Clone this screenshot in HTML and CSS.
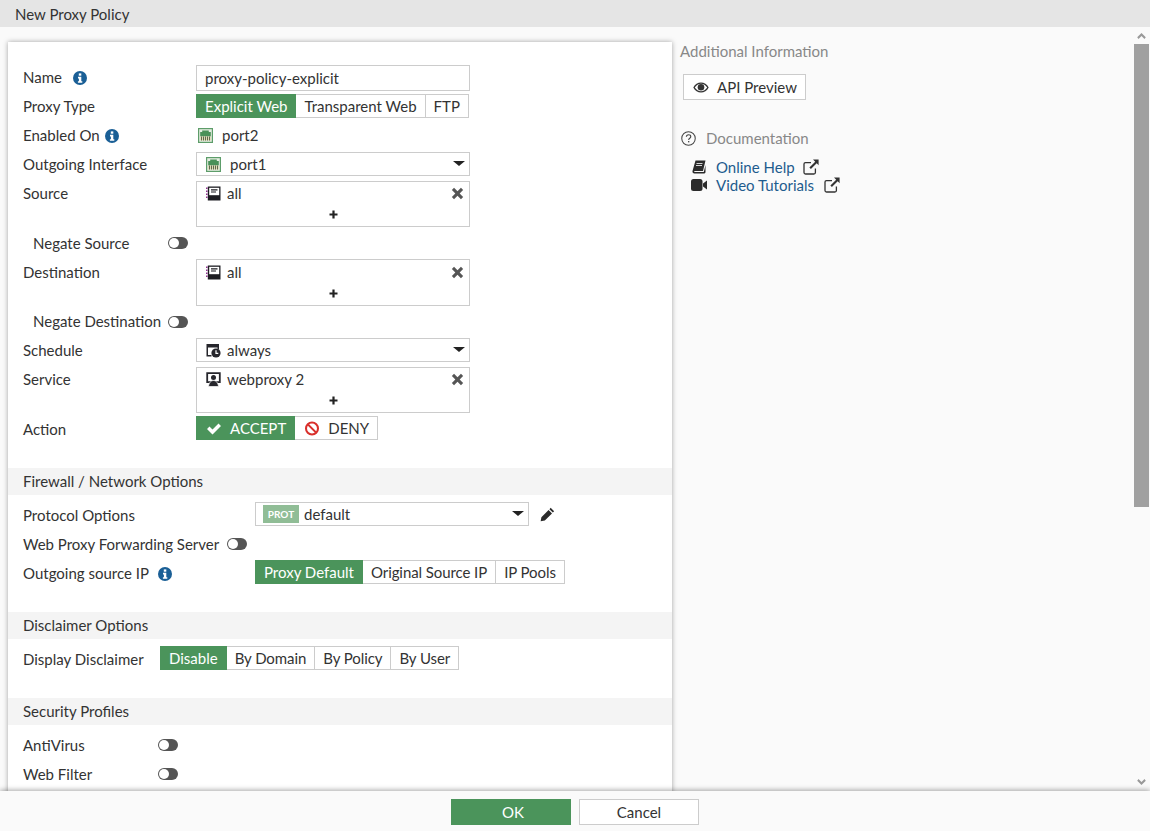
FILE: index.html
```html
<!DOCTYPE html>
<html lang="en">
<head>
<meta charset="utf-8">
<title>New Proxy Policy</title>
<link rel="stylesheet" href="styles.css">
</head>
<body>
<svg class="sprite" aria-hidden="true">
  <symbol id="i-info" viewBox="0 0 14 14"><circle cx="7" cy="7" r="7" fill="#1a5f96"/><rect x="5.800" y="2.400" width="2.500" height="2.300" fill="#fff"/><path d="M5 5.800h3.300v4.400h1v1.600H4.900v-1.600h1V7.400H5z" fill="#fff"/></symbol>
  <symbol id="i-port" viewBox="0 0 15 15"><rect x=".6" y=".6" width="13.800" height="13.800" fill="#e6eee2" stroke="#5d9d6a" stroke-width="1.200"/><path d="M2.200 8.500V4h2V2.600h6.600V4h2v4.500z" fill="#4a9158"/><path d="M2.200 8.500h10.600v4H2.200z" fill="#e0dab4"/><path d="M3.500 8.500v4M5.500 8.500v4M7.500 8.500v4M9.500 8.500v4M11.500 8.500v4" stroke="#5f6a4e" stroke-width="1"/></symbol>
  <symbol id="i-addr" viewBox="0 0 15 15"><path d="M1.800.5h12.700v14H1.800z" fill="#1d1d22"/><rect x="3.200" y="1.800" width="10" height="7.400" fill="#fff"/><path d="M5 3.800h6.500M5 6h5" stroke="#1d1d22" stroke-width="1.200"/><path d="M.8 1.500v1.500M.8 4.500V6M.8 7.500V9M.8 10.500V12" stroke="#8a2c8a" stroke-width="1.500"/></symbol>
  <symbol id="i-sched" viewBox="0 0 15 15"><path d="M.5 1h12.500v5.500h-1.500V4.500H2v7.500h3.500v1.500H.5z" fill="#26262c"/><circle cx="10" cy="10" r="4.600" fill="#26262c"/><path d="M10 7.200V10.300h2.300" stroke="#fff" stroke-width="1.200" fill="none"/></symbol>
  <symbol id="i-proxy" viewBox="0 0 15 15"><path d="M1.200 1.200h12.600v9h-12.600z" fill="none" stroke="#26262c" stroke-width="1.800"/><circle cx="7.500" cy="5.500" r="2.500" fill="#26262c"/><path d="M2.500 14.500c.4-4 2.600-6 5-6s4.600 2 5 6z" fill="#26262c" stroke="#fff" stroke-width=".7"/></symbol>
  <symbol id="i-x" viewBox="0 0 12 12"><path d="M2.800 .8 6 4 9.200 .8 11.200 2.800 8 6l3.200 3.200-2 2L6 8l-3.200 3.200-2-2L4 6 .8 2.800z" fill="#555"/></symbol>
  <symbol id="i-plus" viewBox="0 0 9 9"><path d="M3.400.5h2.200v2.900h2.900v2.200H5.600v2.900H3.400V5.600H.5V3.400h2.900z" fill="#222"/></symbol>
  <symbol id="i-ext" viewBox="0 0 16 16"><path d="M8 3.600H2.500A1.500 1.500 0 0 0 1 5.100v8.400A1.500 1.500 0 0 0 2.500 15h8.400a1.500 1.500 0 0 0 1.500-1.500V9.500" fill="none" stroke="#333" stroke-width="1.300"/><path d="M10 .6h5.600v5.600l-1.900-1.900-5.800 5.800-1.500-1.500 5.800-5.800z" fill="#333"/></symbol>
</svg>

<header class="topbar">New Proxy Policy</header>

<div class="main">
  <section class="card">
    <div class="group">
      <div class="row">
        <label class="lbl lbl-w173 lbl-up">Name <svg class="info info-name"><use href="#i-info"/></svg></label>
        <div class="input">proxy-policy-explicit</div>
      </div>
      <div class="row">
        <label class="lbl lbl-w173 lbl-up">Proxy Type</label>
        <div class="seg"><span class="opt on">Explicit Web</span><span class="opt">Transparent Web</span><span class="opt">FTP</span></div>
      </div>
      <div class="row">
        <label class="lbl lbl-w173 lbl-up">Enabled On <svg class="info"><use href="#i-info"/></svg></label>
        <div class="static"><svg class="ic ic-port"><use href="#i-port"/></svg>port2</div>
      </div>
      <div class="row">
        <label class="lbl lbl-w173 lbl-up">Outgoing Interface</label>
        <div class="select"><svg class="ic ic-port"><use href="#i-port"/></svg>port1<span class="caret"></span></div>
      </div>
      <div class="row">
        <label class="lbl lbl-w173 lbl-up">Source</label>
        <div class="multi">
          <div class="entry"><svg class="ic"><use href="#i-addr"/></svg>all<svg class="x"><use href="#i-x"/></svg></div>
          <div class="add"><svg class="plus"><use href="#i-plus"/></svg></div>
        </div>
      </div>
      <div class="row row-sub">
        <label class="lbl lbl-w135">Negate Source</label><span class="toggle"></span>
      </div>
      <div class="row">
        <label class="lbl lbl-w173">Destination</label>
        <div class="multi multi-tall">
          <div class="entry"><svg class="ic"><use href="#i-addr"/></svg>all<svg class="x"><use href="#i-x"/></svg></div>
          <div class="add"><svg class="plus"><use href="#i-plus"/></svg></div>
        </div>
      </div>
      <div class="row row-sub">
        <label class="lbl lbl-w135 lbl-up">Negate Destination</label><span class="toggle"></span>
      </div>
      <div class="row">
        <label class="lbl lbl-w173 lbl-up">Schedule</label>
        <div class="select"><svg class="ic"><use href="#i-sched"/></svg>always<span class="caret"></span></div>
      </div>
      <div class="row">
        <label class="lbl lbl-w173 lbl-up">Service</label>
        <div class="multi">
          <div class="entry"><svg class="ic"><use href="#i-proxy"/></svg>webproxy 2<svg class="x"><use href="#i-x"/></svg></div>
          <div class="add"><svg class="plus"><use href="#i-plus"/></svg></div>
        </div>
      </div>
      <div class="row">
        <label class="lbl lbl-w173">Action</label>
        <div class="seg">
          <span class="opt on opt-icon"><svg class="act" viewBox="0 0 16 14"><path d="M1 7.500 3.500 5l3 3L12.500 2 15 4.500 6.500 13z" fill="#fff"/></svg>ACCEPT</span>
          <span class="opt opt-icon"><svg class="act" viewBox="0 0 16 16"><circle cx="8" cy="8" r="6.400" fill="none" stroke="#d9302c" stroke-width="2.200"/><path d="M3.600 3.600l8.800 8.800" stroke="#d9302c" stroke-width="2.200"/></svg>DENY</span>
        </div>
      </div>
    </div>

    <h3 class="band">Firewall / Network Options</h3>
    <div class="group group-tight">
      <div class="row">
        <label class="lbl lbl-w232">Protocol Options</label>
        <div class="select"><span class="prot">PROT</span>default<span class="caret"></span></div>
        <svg class="pencil" viewBox="0 0 14 14"><path d="M10 .8 13.200 4 12 5.200 8.800 2zM8 2.800 11.200 6 4.500 12.700.6 13.400l.7-3.900z" fill="#2b2b2b"/></svg>
      </div>
      <div class="row">
        <label class="lbl lbl-w204">Web Proxy Forwarding Server</label><span class="toggle"></span>
      </div>
      <div class="row">
        <label class="lbl lbl-w232">Outgoing source IP <svg class="info info-src"><use href="#i-info"/></svg></label>
        <div class="seg seg-tight"><span class="opt on">Proxy Default</span><span class="opt">Original Source IP</span><span class="opt">IP Pools</span></div>
      </div>
    </div>

    <h3 class="band">Disclaimer Options</h3>
    <div class="group group-tight">
      <div class="row">
        <label class="lbl lbl-w137">Display Disclaimer</label>
        <div class="seg seg-tight"><span class="opt on">Disable</span><span class="opt">By Domain</span><span class="opt">By Policy</span><span class="opt">By User</span></div>
      </div>
    </div>

    <h3 class="band">Security Profiles</h3>
    <div class="group group-tight">
      <div class="row">
        <label class="lbl lbl-w135">AntiVirus</label><span class="toggle"></span>
      </div>
      <div class="row">
        <label class="lbl lbl-w135">Web Filter</label><span class="toggle"></span>
      </div>
    </div>
  </section>

  <aside class="side">
    <h4 class="side-title">Additional Information</h4>
    <button class="api" type="button">
      <svg class="eye" viewBox="0 0 16 11"><path d="M8 .5C4.800.5 2 2.300.3 5.500 2 8.700 4.800 10.500 8 10.500s6-1.800 7.700-5C14 2.300 11.200.500 8 .5zm0 1.200c2.500 0 4.700 1.400 6.200 3.800-1.500 2.400-3.700 3.800-6.200 3.800S3.300 7.900 1.800 5.500C3.300 3.100 5.500 1.700 8 1.700z" fill="#333"/><circle cx="8" cy="5.300" r="3.300" fill="#333"/></svg>
      API Preview
    </button>
    <div class="doc-head">
      <svg class="help" viewBox="0 0 16 16"><circle cx="8" cy="8" r="7.200" fill="none" stroke="#444" stroke-width="1.100"/><path d="M5.700 6.200C5.800 4.800 6.800 4 8.100 4c1.400 0 2.300.9 2.300 2 0 1.800-2.200 1.700-2.200 3.500" fill="none" stroke="#444" stroke-width="1.200"/><rect x="7.500" y="10.700" width="1.400" height="1.400" fill="#444"/></svg>
      Documentation
    </div>
    <div class="links">
      <a class="doc-link"><svg class="doc-ic" viewBox="0 0 14 14"><path d="M3.500.5H13.500L11 11H2.800C2 11 1.800 11.800 2.600 12H11.800L13.500 5V12.500L12.500 13.500H2.500C1 13.500.2 12.500.5 11z" fill="#2b2b2b"/><path d="M4.500 3.500h6M4 5.500h6" stroke="#fff" stroke-width=".8"/></svg>Online Help<svg class="ext"><use href="#i-ext"/></svg></a>
      <a class="doc-link"><svg class="doc-ic" viewBox="0 0 16 12"><rect x="0" y="0" width="11.500" height="12" rx="2.500" fill="#2b2b2b"/><path d="M12 4.500 16 1.500v9L12 7.500z" fill="#2b2b2b"/></svg>Video Tutorials<svg class="ext ext-wide"><use href="#i-ext"/></svg></a>
    </div>
  </aside>

  <div class="scrollbar">
    <svg class="chev" viewBox="0 0 10 7"><path d="M5 0 10 5 8.500 7 5 3.500 1.500 7 0 5z" fill="#999"/></svg>
    <div class="thumb-track"><div class="thumb"></div></div>
    <svg class="chev" viewBox="0 0 10 7"><path d="M5 7 0 2 1.500 0 5 3.500 8.500 0 10 2z" fill="#999"/></svg>
  </div>
</div>

<footer class="footer">
  <button class="btn btn-ok" type="button">OK</button>
  <button class="btn" type="button">Cancel</button>
</footer>
</body>
</html>
```
FILE: styles.css
```css
* { box-sizing: border-box; }
html, body { margin: 0; height: 100%; }
body {
  height: 831px;
  overflow: hidden;
  display: flex;
  flex-direction: column;
  background: #fafafa;
  color: #333;
  font: 15px/20px Lato, "Open Sans", sans-serif;
}
.sprite { position: absolute; width: 0; height: 0; }

.topbar {
  height: 27px;
  flex: none;
  padding: 4px 15px 0;
  background: #e5e5e5;
  line-height: 20px;
}

.main {
  flex: 1;
  display: flex;
  min-height: 0;
  overflow: hidden;
}

.card {
  flex: none;
  width: 664px;
  margin: 15px 0 0 8px;
  height: 800px;
  padding-top: 23px;
  background: #fff;
  box-shadow: 0 0 5px rgba(0, 0, 0, .35);
}

.group { display: flex; flex-direction: column; gap: 3px; padding-left: 15px; }
.group-tight { padding-top: 7px; }

.row { display: flex; align-items: flex-start; min-height: 26px; }
.row-sub { padding-left: 10px; }

.lbl { flex: none; line-height: 26px; display: block; }
.lbl-up { line-height: 24px; }
.lbl-w173 { width: 173px; }
.lbl-w232 { width: 232px; }
.lbl-w204 { width: 204px; }
.lbl-w137 { width: 137px; }
.lbl-w135 { width: 135px; }

.info { width: 14px; height: 14px; vertical-align: -2px; margin-left: 2px; }
.info-name { margin-left: 7px; }
.info-src { margin-left: 6px; }

.input, .select, .multi { width: 274px; border: 1px solid #ccc; background: #fff; }
.input { height: 26px; padding-left: 8px; line-height: 25px; }

.select {
  height: 24px;
  display: flex;
  align-items: center;
  padding-left: 9px;
  position: relative;
  line-height: 23px;
}
.caret {
  position: absolute;
  right: 4px;
  top: 8px;
  width: 0;
  height: 0;
  border-left: 6px solid transparent;
  border-right: 6px solid transparent;
  border-top: 5px solid #222;
}

.ic { width: 15px; height: 15px; margin-right: 6px; flex: none; }
.ic-port { margin-right: 9px; }

.static { display: flex; align-items: center; height: 24px; padding-left: 2px; }

.multi { height: 46px; padding-top: 1px; }
.multi-tall { height: 47px; padding-top: 2px; }
.entry { display: flex; align-items: center; height: 20px; line-height: 20px; padding: 0 5px 0 9px; }
.x { width: 13px; height: 13px; margin-left: auto; }
.add { display: flex; justify-content: center; padding-top: 7px; height: 21px; }
.plus { width: 9px; height: 9px; }

.seg { display: flex; height: 24px; }
.opt {
  display: flex;
  align-items: center;
  padding: 0 8px;
  border: 1px solid #ccc;
  border-left-width: 0;
  background: #fff;
  line-height: 23px;
}
.opt:first-child { border-left-width: 1px; }
.opt.on { background: #4b945b; border-color: #4b945b; color: #fff; }
.seg-tight .opt:not(.on) { letter-spacing: -.08px; }
.opt-icon { padding: 0 8px 0 9px; }
.opt-icon + .opt-icon { padding-left: 9px; }
.act { width: 16px; height: 15px; margin-right: 8px; }

.toggle {
  width: 20px;
  height: 12px;
  margin-top: 7px;
  border-radius: 6px;
  background: #555;
  position: relative;
  flex: none;
}
.toggle::before {
  content: "";
  position: absolute;
  left: 1px;
  top: 1px;
  width: 10px;
  height: 10px;
  border-radius: 50%;
  background: #fff;
}

.band {
  margin: 26px 0 0;
  height: 27px;
  padding-left: 15px;
  font-size: inherit;
  font-weight: 400;
  line-height: 27px;
  background: #f4f4f4;
}

.prot {
  width: 36px;
  height: 18px;
  margin-right: 5px;
  background: #90bd96;
  color: #fff;
  font-size: 10px;
  font-weight: 700;
  line-height: 18px;
  text-align: center;
  flex: none;
}
.group-tight .select { padding-left: 7px; }
.pencil { width: 15px; height: 15px; margin: 5px 0 0 11px; }

.side { flex: 1; padding: 0 0 0 8px; min-width: 0; }
.side-title { margin: 14px 0 0; font-size: inherit; font-weight: 400; color: #888; line-height: 20px; }
.api {
  display: flex;
  align-items: center;
  width: 123px;
  height: 26px;
  margin: 13px 0 0 3px;
  padding: 0 0 0 9px;
  border: 1px solid #ccc;
  background: #fff;
  color: #333;
  font: inherit;
}
.eye { width: 16px; height: 11px; margin-right: 8px; }
.doc-head { display: flex; align-items: center; margin: 28px 0 0 1px; height: 20px; color: #888; }
.help { width: 15px; height: 15px; margin-right: 10px; }
.links { margin: 10px 0 0 11px; display: flex; flex-direction: column; }
.doc-link { display: flex; align-items: center; height: 18px; color: #1e5c8e; }
.doc-ic { width: 16px; height: 14px; margin-right: 9px; flex: none; }
.ext { width: 16px; height: 16px; margin-left: 8px; }
.ext-wide { margin-left: 10px; }

.scrollbar {
  flex: none;
  width: 16px;
  margin-right: 1px;
  display: flex;
  flex-direction: column;
  align-items: center;
  padding: 6px 0;
}
.chev { width: 9px; height: 6px; flex: none; }
.thumb-track { flex: 1; width: 100%; padding-top: 5px; padding-bottom: 5px; }
.thumb { width: 15px; height: 463px; margin-left: auto; background: #a0a0a0; }

.footer {
  flex: none;
  height: 40px;
  display: flex;
  justify-content: center;
  gap: 8px;
  padding-top: 8px;
  background: #fafafa;
  box-shadow: 0 -1px 5px rgba(0, 0, 0, .35);
  position: relative;
}
.btn {
  width: 120px;
  height: 26px;
  border: 1px solid #ccc;
  background: #fff;
  color: #333;
  font: inherit;
  padding: 0;
}
.btn-ok { background: #4b945b; border-color: #4b945b; color: #fff; padding-left: 4px; }
```
